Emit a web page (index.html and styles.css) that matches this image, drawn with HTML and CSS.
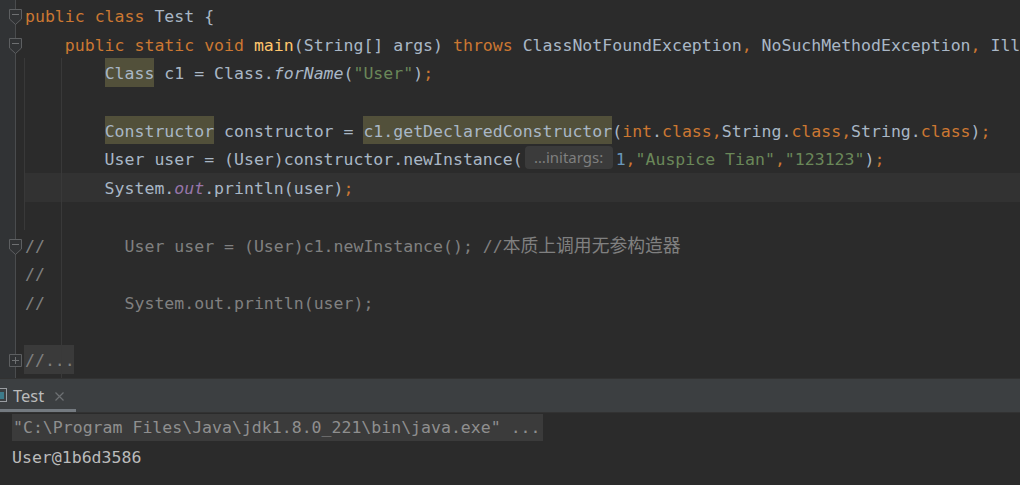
FILE: index.html
```html
<!DOCTYPE html>
<html lang="en">

<head>
    <meta charset="UTF-8">
    <title>Test.java</title>
    <link rel="stylesheet" href="styles.css">
</head>

<body>
    <div class="editor">
        <div class="gutter"></div>
        <div class="code">
            <div class="guide guide-class"></div>
            <div class="guide guide-method"></div>
            <div class="line"><span class="kw">public class</span> Test {</div>
            <div class="line">    <span class="kw">public static void</span> <span class="fn">main</span>(String[] args) <span class="kw">throws</span> ClassNotFoundException<span class="kw">,</span> NoSuchMethodException<span class="kw">,</span> Ill</div>
            <div class="line">        <span class="mark">Class</span> c1 = Class.<i>forName</i>(<span class="str">"User"</span>)<span class="kw">;</span></div>
            <div class="line"></div>
            <div class="line">        <span class="mark">Constructor</span> constructor = <span class="mark">c1.getDeclaredConstructor</span>(<span class="kw">int</span>.<span class="kw">class,</span>String.<span class="kw">class,</span>String.<span class="kw">class</span>)<span class="kw">;</span></div>
            <div class="line">        User user = (User)constructor.newInstance(<span class="hint">…initargs:</span><span class="num">1</span><span class="kw">,</span><span class="str">"Auspice Tian"</span><span class="kw">,</span><span class="str">"123123"</span>)<span class="kw">;</span></div>
            <div class="line current">        System.<i class="field">out</i>.println(user)<span class="kw">;</span></div>
            <div class="line"></div>
            <div class="line comment">//        User user = (User)c1.newInstance(); //<span class="cjk">本质上调用无参构造器</span></div>
            <div class="line comment">//</div>
            <div class="line comment">//        System.out.println(user);</div>
            <div class="line"></div>
            <div class="line comment"><span class="folded">//...</span></div>
        </div>

        <!-- 折叠标记 -->
        <svg class="fold fold-1" width="14" height="17" viewBox="0 0 14 17">
            <path d="M0.5 0.5H12.5V10L6.5 15.5L0.5 10Z" fill="#313335" stroke="#5d5f61" />
            <path d="M3 5.5H10" stroke="#6e7072" />
        </svg>
        <svg class="fold fold-2" width="14" height="17" viewBox="0 0 14 17">
            <path d="M0.5 0.5H12.5V10L6.5 15.5L0.5 10Z" fill="#313335" stroke="#5d5f61" />
            <path d="M3 5.5H10" stroke="#6e7072" />
        </svg>
        <svg class="fold fold-9" width="14" height="17" viewBox="0 0 14 17">
            <path d="M0.5 0.5H12.5V10L6.5 15.5L0.5 10Z" fill="#313335" stroke="#5d5f61" />
            <path d="M3 5.5H10" stroke="#6e7072" />
        </svg>
        <svg class="fold fold-13" width="14" height="14" viewBox="0 0 14 14">
            <path d="M0.5 0.5H12.5V12.5H0.5Z" fill="#313335" stroke="#5d5f61" />
            <path d="M3 6.5H10M6.5 3V10" stroke="#6e7072" />
        </svg>
    </div>

    <div class="tool">
        <div class="tool-header">
            <div class="tab">
                <svg class="tab-icon" width="8" height="16" viewBox="0 0 8 16">
                    <rect x="-6.5" y="1.5" width="13" height="13" fill="#3c3f41" stroke="#9a9ea2" />
                    <rect x="-4" y="5" width="8" height="7" fill="#3d7b8a" />
                </svg>
                <span class="tab-title">Test</span>
                <svg class="tab-close" width="9" height="9" viewBox="0 0 9 9">
                    <path d="M0.5 0.5L8.5 8.5M8.5 0.5L0.5 8.5" stroke="#6d7073" stroke-width="1.2" />
                </svg>
            </div>
        </div>
        <div class="console">
            <div class="console-line"><span class="cmd">"C:\Program Files\Java\jdk1.8.0_221\bin\java.exe" ...</span></div>
            <div class="console-line out">User@1b6d3586</div>
        </div>
    </div>
</body>

</html>
```

FILE: styles.css
```css
* {
    padding: 0;
    margin: 0;
    box-sizing: border-box;
}

body {
    width: 1020px;
    height: 485px;
    overflow: hidden;
    background-color: #2b2b2b;
    color: #a9b7c6;
    font-family: "DejaVu Sans Mono", "Noto Sans CJK SC", monospace;
    font-size: 16.55px;
}

.editor {
    position: relative;
    display: flex;
    height: 378px;
}

.gutter {
    flex: none;
    width: 16px;
    background-color: #313335;
    border-right: 1px solid #4a4c4e;
}

.code {
    position: relative;
    flex: 1;
    padding: 1px 0 0 8px;
    overflow: hidden;
}

/* 文字比行框下移2px，行背景不动 */
.line {
    height: 28.7px;
    line-height: 28.7px;
    padding: 2px 0 0 1px;
    white-space: pre;
}

.line.current {
    background-color: #323232;
}

/* 缩进参考线 */
.guide {
    position: absolute;
    width: 1px;
    background-color: #393939;
}

.guide-class {
    left: 8px;
    top: 58px;
    height: 172px;
}

.guide-method {
    left: 45px;
    top: 58px;
    bottom: 0;
}

.kw {
    color: #cc7832;
}

.fn {
    color: #ffc66d;
}

.str {
    color: #6a8759;
}

.num {
    color: #6897bb;
}

i {
    font-style: italic;
}

.field {
    color: #9876aa;
}

.mark,
.folded {
    display: inline-block;
    line-height: 24.7px;
    padding-top: 4px;
    margin-top: -4px;
}

.mark {
    background-color: #52503a;
}

.hint {
    display: inline-block;
    width: 88px;
    height: 23px;
    margin: 0 3px 0 2px;
    line-height: 23px;
    vertical-align: 2px;
    text-align: center;
    border-radius: 4px;
    background-color: #3b3b3b;
    color: #7f7f7f;
    font-family: "Noto Sans", "Open Sans", sans-serif;
    font-size: 15px;
}

.comment {
    color: #808080;
}

/* 中文字体行高大，压低避免撑高行框 */
.cjk {
    font-family: "Noto Sans CJK SC", sans-serif;
    font-size: 17.8px;
    line-height: 16px;
}

.folded {
    width: 50px;
    margin-left: -1px;
    padding-left: 1px;
    background-color: #3a3a3a;
}

.fold {
    position: absolute;
    left: 9px;
}

.fold-1 {
    top: 9px;
}

.fold-2 {
    top: 38px;
}

.fold-9 {
    top: 239px;
}

.fold-13 {
    top: 354px;
}

.tool-header {
    height: 35px;
    background-color: #3c3f41;
    border-top: 1px solid #323232;
    border-bottom: 1px solid #323232;
}

.tab {
    display: flex;
    align-items: center;
    width: 76px;
    height: 100%;
    padding-top: 2px;
    border-bottom: 3px solid #747a80;
    color: #bbbbbb;
    font-family: "Noto Sans", "Open Sans", sans-serif;
    font-size: 16.5px;
}

.tab-icon {
    margin-right: 5px;
}

.tab-close {
    margin-left: 11px;
    margin-top: 2px;
}

.console {
    padding: 1px 0 0 12px;
}

.console-line {
    height: 28px;
    line-height: 28px;
    white-space: pre;
}

.cmd {
    display: inline-block;
    line-height: 27px;
    padding: 0 2px 0 1px;
    background-color: #3b3b3b;
    color: #8f8f8f;
}

.out {
    height: 32px;
    line-height: 32px;
    color: #bbbbbb;
}
```
